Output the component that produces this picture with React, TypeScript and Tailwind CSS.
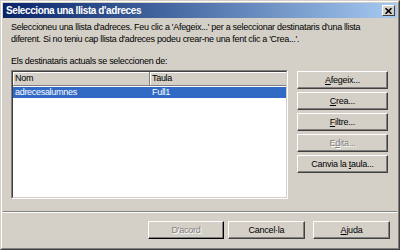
import React from 'react';

const font = { fontFamily: '"Liberation Sans", Arial, sans-serif' };

function WinButton({
  children,
  disabled,
  className = '',
}: {
  children: React.ReactNode;
  disabled?: boolean;
  className?: string;
}) {
  return (
    <button
      className={`h-[18px] flex items-center justify-center bg-[#d4d0c8] border border-t-white border-l-white border-r-[#404040] border-b-[#404040] shadow-[inset_-1px_-1px_#808080] text-[9px] tracking-[-0.25px] leading-none ${
        disabled ? 'text-[#808080] [text-shadow:1px_1px_#ffffff]' : 'text-black'
      } ${className}`}
    >
      {children}
    </button>
  );
}

export default function App() {
  return (
    <div
      className="w-[400px] h-[250px] bg-[#d4d0c8] border border-t-[#d4d0c8] border-l-[#d4d0c8] border-r-[#404040] border-b-[#404040] flex flex-col"
      style={font}
    >
      <div className="flex-1 flex flex-col border border-t-white border-l-white border-r-[#808080] border-b-[#808080] p-[1px]">
        {/* Title bar */}
        <div className="h-[15px] flex items-center justify-between pl-[3px] pr-[2px] bg-gradient-to-r from-[#0a246a] to-[#a6caf0]">
          <span className="text-white font-bold text-[10px] tracking-[-0.4px] leading-none">Selecciona una llista d'adreces</span>
          <div className="w-[13px] h-[11px] bg-[#d4d0c8] border border-t-white border-l-white border-r-[#404040] border-b-[#404040] flex items-center justify-center">
            <svg width="7" height="6" viewBox="0 0 7 6">
              <path d="M0.5 0.2 L6.5 5.8 M6.5 0.2 L0.5 5.8" stroke="#000" strokeWidth="1.6" />
            </svg>
          </div>
        </div>

        {/* Body */}
        <div className="flex-1 flex flex-col pl-[8px] pr-[8px] text-[9px] tracking-[-0.3px] leading-[12px] text-black">
          <p className="mt-[3px] whitespace-nowrap">
            Seleccioneu una llista d'adreces. Feu clic a 'Afegeix...' per a seleccionar destinataris d'una llista
            <br />
            diferent. Si no teniu cap llista d'adreces podeu crear-ne una fent clic a 'Crea...'.
          </p>
          <p className="mt-[10px]">Els destinataris actuals se seleccionen de:</p>

          <div className="mt-[3px] flex gap-[9px]">
            {/* List */}
            <div className="w-[277px] h-[129px] bg-white border border-t-[#808080] border-l-[#808080] border-r-white border-b-white">
              <div className="w-full h-full border border-t-[#404040] border-l-[#404040] border-r-[#d4d0c8] border-b-[#d4d0c8] flex flex-col">
                <div className="flex h-[14px] leading-none">
                  <div className="w-[137px] bg-[#d4d0c8] border-r border-b border-r-[#808080] border-b-[#808080] shadow-[inset_1px_1px_#ffffff] flex items-center pl-[2px]">
                    Nom
                  </div>
                  <div className="flex-1 bg-[#d4d0c8] border-b border-b-[#808080] shadow-[inset_1px_1px_#ffffff] flex items-center pl-[2px]">
                    Taula
                  </div>
                </div>
                <div className="flex h-[11px] mt-[1px] bg-[#316ac5] text-white leading-none items-center">
                  <div className="w-[137px] pl-[2px]">adrecesalumnes</div>
                  <div className="flex-1 pl-[2px]">Full1</div>
                </div>
              </div>
            </div>

            {/* Right buttons */}
            <div className="flex flex-col gap-[3px] pt-[1px]">
              <WinButton className="w-[91px]">
                <span><u>A</u>fegeix...</span>
              </WinButton>
              <WinButton className="w-[91px]">
                <span><u>C</u>rea...</span>
              </WinButton>
              <WinButton className="w-[91px]">
                <span><u>F</u>iltre...</span>
              </WinButton>
              <WinButton className="w-[91px]" disabled>
                <span>E<u>d</u>ita...</span>
              </WinButton>
              <WinButton className="w-[91px]">
                <span>Canvia la <u>t</u>aula...</span>
              </WinButton>
            </div>
          </div>
        </div>

        {/* Separator */}
        <div className="border-t border-t-[#808080] border-b border-b-white" />

        <div className="h-[34px] flex justify-end items-start pt-[8px] pr-[7px]">
          <WinButton className="w-[76px] border-r-black border-b-black" disabled>
            D'acord
          </WinButton>
          <WinButton className="w-[77px] ml-[4px]">Cancel·la</WinButton>
          <WinButton className="w-[77px] ml-[8px]">
            <span><u>A</u>juda</span>
          </WinButton>
        </div>
      </div>
    </div>
  );
}
